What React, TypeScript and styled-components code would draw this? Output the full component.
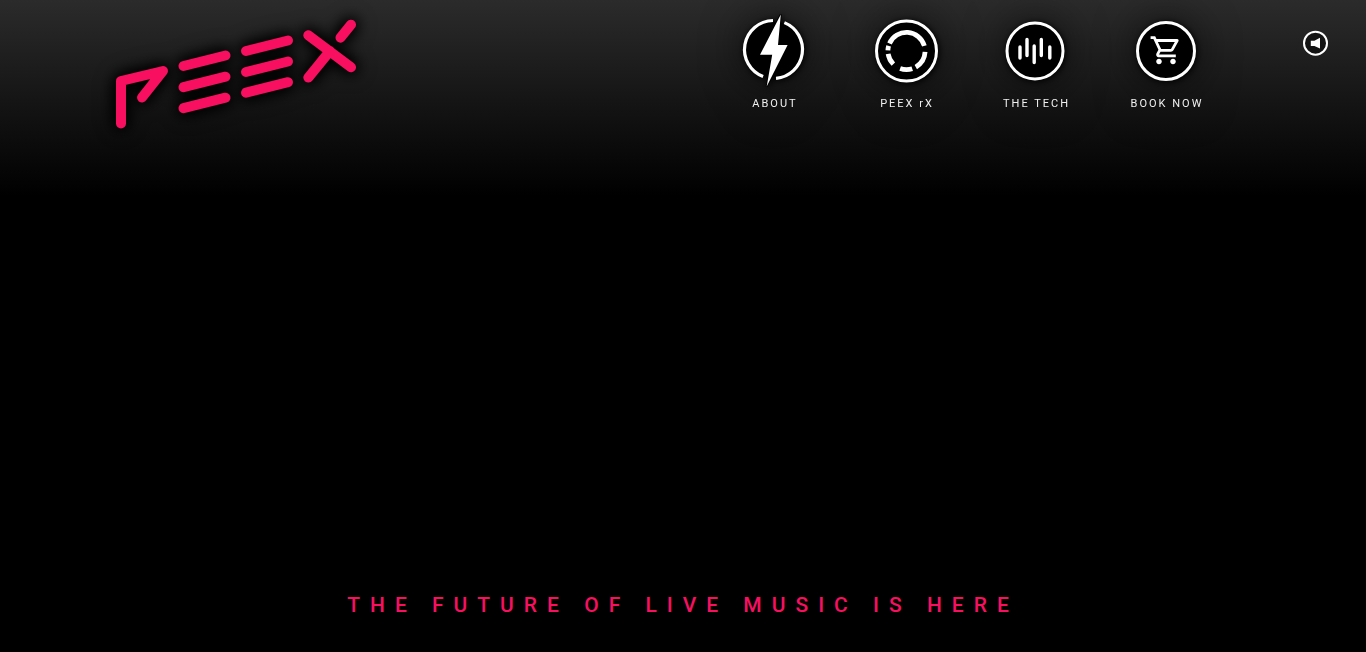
import React from "react";
import styled, { createGlobalStyle } from "styled-components";
import { MdOutlineShoppingCart } from "react-icons/md";

const pink = "#f80f60";

const GlobalStyle = createGlobalStyle`
  * { box-sizing: border-box; }
  body {
    margin: 0;
    background: #000;
    color: #fff;
    font-family: Roboto, "Liberation Sans", sans-serif;
  }
`;

const Page = styled.div`
  display: flex;
  flex-direction: column;
  min-height: 100vh;
`;

const Header = styled.header`
  display: flex;
  align-items: flex-start;
  height: 196px;
  padding-left: 100px;
  padding-right: 37px;
  background: linear-gradient(#2b2b2b, #000);
`;

const LogoLink = styled.a`
  display: block;
  margin-right: auto;

  svg {
    display: block;
    overflow: visible;
    filter: drop-shadow(0 0 7px #000) drop-shadow(0 0 7px #000);
  }
`;

const Nav = styled.nav`
  display: flex;
`;

const NavItem = styled.a<{ $width: number }>`
  display: flex;
  flex-direction: column;
  align-items: center;
  width: ${(p) => p.$width}px;
  padding-top: 10px;
  color: #f0f0f0;
  text-decoration: none;
  filter: drop-shadow(0 0 20px rgba(0, 0, 0, 0.6));

  svg {
    display: block;
    overflow: visible;
    filter: drop-shadow(1px 1px 3px #000);
  }
`;

const NavLabel = styled.span`
  margin-top: 6px;
  padding-left: 2px;
  font-size: 11px;
  line-height: 16px;
  letter-spacing: 2px;
  white-space: nowrap;
`;

const SoundButton = styled.button`
  display: block;
  width: 26px;
  height: 26px;
  margin: 30px 0 0 70px;
  padding: 0;
  border: 0;
  background: none;
  color: #fff;
  cursor: pointer;

  svg { display: block; }
`;

const Hero = styled.main`
  display: flex;
  flex: 1;
  flex-direction: column;
  justify-content: flex-end;
  padding-bottom: 31px;
`;

const Tagline = styled.h1`
  margin: 0;
  color: ${pink};
  font-size: 21px;
  font-weight: 500;
  line-height: 32px;
  letter-spacing: 10px;
  text-align: center;
`;

const arc = (cx: number, cy: number, r: number, from: number, to: number) => {
  const point = (deg: number) => {
    const a = (deg * Math.PI) / 180;
    return `${(cx + r * Math.cos(a)).toFixed(2)} ${(cy + r * Math.sin(a)).toFixed(2)}`;
  };
  return `M${point(from)}A${r} ${r} 0 ${to - from > 180 ? 1 : 0} 1 ${point(to)}`;
};

const Logo = () => (
  <svg width="270" height="140" viewBox="0 0 270 140" fill="none" stroke={pink} strokeWidth="10" strokeLinecap="round" strokeLinejoin="round" aria-hidden="true">
    <path d="M21 123.5V81L63 71 42 97.5" />
    <path d="M83.5 66l42-10.5M83.5 87.2l42-10.5M83.5 108.2l42-10.5" />
    <path d="M146 51l42-10.5M146 72l42-10.5M146 92.7l42-10.5" />
    <path d="M208.3 35.3L251 67.3M208.3 77.6L230 51M240.5 37.7L251 24.7" />
  </svg>
);

const AboutIcon = () => (
  <svg width="80" height="80" viewBox="0 0 80 80" aria-hidden="true">
    <circle cx="39.5" cy="39.5" r="28" fill="#000" />
    <path d={arc(39.5, 39.5, 29, 111, 269) + arc(39.5, 39.5, 29, -68, 85)} fill="none" stroke="#fff" strokeWidth="3.2" />
    <path d="M46.8 4.5L26 44.8H38.2L32.7 76.5 53.6 35H44z" fill="#fff" stroke="#000" strokeWidth="2" paintOrder="stroke" />
  </svg>
);

const ReceiverIcon = () => (
  <svg width="80" height="80" viewBox="0 0 80 80" aria-hidden="true">
    <circle cx="40.5" cy="41" r="30" fill="#000" stroke="#fff" strokeWidth="3" />
    <path
      d={[[204, 344], [182, 196], [135, 171], [72, 110], [3, 60]].map(([a, b]) => arc(40.5, 41, 18.6, a, b)).join("")}
      fill="none" stroke="#fff" strokeWidth="4.8"
    />
  </svg>
);

const TechIcon = () => (
  <svg width="80" height="80" viewBox="0 0 80 80" aria-hidden="true">
    <circle cx="39" cy="41" r="28" fill="#000" stroke="#fff" strokeWidth="3" />
    <path d="M24 37V48M31 29.5V45.5M38.2 36V52.5M45.3 29.5V45.5M53.8 37V48" stroke="#fff" strokeWidth="3.4" strokeLinecap="round" />
  </svg>
);

const CartIcon = () => (
  <svg width="80" height="80" viewBox="0 0 80 80" aria-hidden="true">
    <circle cx="40" cy="41" r="28.5" fill="#000" stroke="#fff" strokeWidth="3" />
    <MdOutlineShoppingCart x="23.2" y="23.5" size="33.6" color="#fff" />
  </svg>
);

const items = [
  { label: "ABOUT", width: 132, Icon: AboutIcon },
  { label: "PEEX rX", width: 132, Icon: ReceiverIcon },
  { label: "THE TECH", width: 127, Icon: TechIcon },
  { label: "BOOK NOW", width: 134, Icon: CartIcon },
];

export default function App() {
  return (
    <Page>
      <GlobalStyle />
      <Header>
        <LogoLink href="#" aria-label="PEEX">
          <Logo />
        </LogoLink>
        <Nav>
          {items.map(({ label, width, Icon }) => (
            <NavItem key={label} href="#" $width={width}>
              <Icon />
              <NavLabel>{label}</NavLabel>
            </NavItem>
          ))}
        </Nav>
        <SoundButton type="button" aria-label="Toggle sound">
          <svg width="26" height="26" viewBox="0 0 26 26" aria-hidden="true">
            <circle cx="12.5" cy="13.2" r="11.5" fill="#000" fillOpacity="0.4" stroke="#fff" strokeWidth="2" />
            <path d="M7.8 10.7h3.6L17 7.8v10.8L11.4 16H7.8z" fill="#fff" />
          </svg>
        </SoundButton>
      </Header>
      <Hero>
        <Tagline>THE FUTURE OF LIVE MUSIC IS HERE</Tagline>
      </Hero>
    </Page>
  );
}
